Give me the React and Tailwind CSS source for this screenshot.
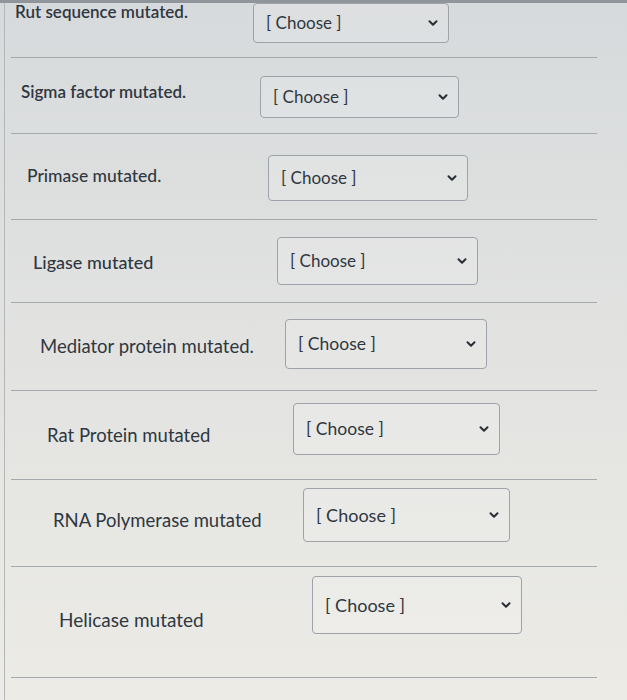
import React from 'react';
import { ChevronDown } from 'lucide-react';

const rows = [
  { label: 'Rut sequence mutated.', row: 'h-[55px] pl-[4px]', text: '-mt-[3px] w-[238px] text-[17px] font-semibold', select: 'mt-0 h-[40px] w-[196px]', choose: 'text-[17px]' },
  { label: 'Sigma factor mutated.', row: 'h-[76px] pl-[10px]', text: 'mt-[22px] w-[239px] text-[17px] font-semibold', select: 'mt-[18px] h-[42px] w-[199px]', choose: 'text-[17px]' },
  { label: 'Primase mutated.', row: 'h-[86px] pl-[16px]', text: 'mt-[30px] w-[241px] text-[17.5px] font-medium', select: 'mt-[21px] h-[46px] w-[200px]', choose: 'text-[17px]' },
  { label: 'Ligase mutated', row: 'h-[83px] pl-[22px]', text: 'mt-[30px] w-[244px] text-[18px] font-medium', select: 'mt-[17px] h-[48px] w-[201px]', choose: 'text-[17px]' },
  { label: 'Mediator protein mutated.', row: 'h-[88px] pl-[29px]', text: 'mt-[31px] w-[245px] text-[18.5px] font-normal', select: 'mt-[16px] h-[50px] w-[202px]', choose: 'text-[17.5px]' },
  { label: 'Rat Protein mutated', row: 'h-[89px] pl-[36px]', text: 'mt-[32px] w-[246px] text-[18.5px] font-normal', select: 'mt-[12px] h-[52px] w-[207px]', choose: 'text-[17.5px]' },
  { label: 'RNA Polymerase mutated', row: 'h-[87px] pl-[42px]', text: 'mt-[28px] w-[250px] text-[18.5px] font-normal', select: 'mt-[8px] h-[54px] w-[207px]', choose: 'text-[18px]' },
  { label: 'Helicase mutated', row: 'h-[111px] pl-[48px]', text: 'mt-[41px] w-[253px] text-[19px] font-normal', select: 'mt-[9px] h-[58px] w-[210px]', choose: 'text-[18px]' },
];

const ChooseSelect = ({ className, textSize }) => (
  <div className={`flex items-center justify-between rounded-[4px] border border-[#9da3a8] bg-white/15 pl-[12px] pr-[8px] ${className}`}>
    <span className={`leading-[22px] text-[#2f3740] ${textSize}`}>[ Choose ]</span>
    <ChevronDown size={14} strokeWidth={3.5} className="text-[#2a2f35]" />
  </div>
);

export default function App() {
  return (
    <div
      className="h-[700px] w-[627px] overflow-hidden border-t-[3px] border-[#8f959b] bg-gradient-to-b from-[#d7dadc] via-[#e2e3e1] to-[#ecebe6]"
      style={{ fontFamily: 'Lato, "Open Sans", sans-serif' }}
    >
      <div className="ml-[4px] mr-[30px] h-full border-l border-[#b3b7ba] pl-[6px]">
        {rows.map((r) => (
          <div key={r.label} className={`flex items-start border-b border-[#a4a9ad] ${r.row}`}>
            <span className={`shrink-0 leading-[24px] text-[#2f3740] ${r.text}`}>{r.label}</span>
            <ChooseSelect className={r.select} textSize={r.choose} />
          </div>
        ))}
      </div>
    </div>
  );
}
